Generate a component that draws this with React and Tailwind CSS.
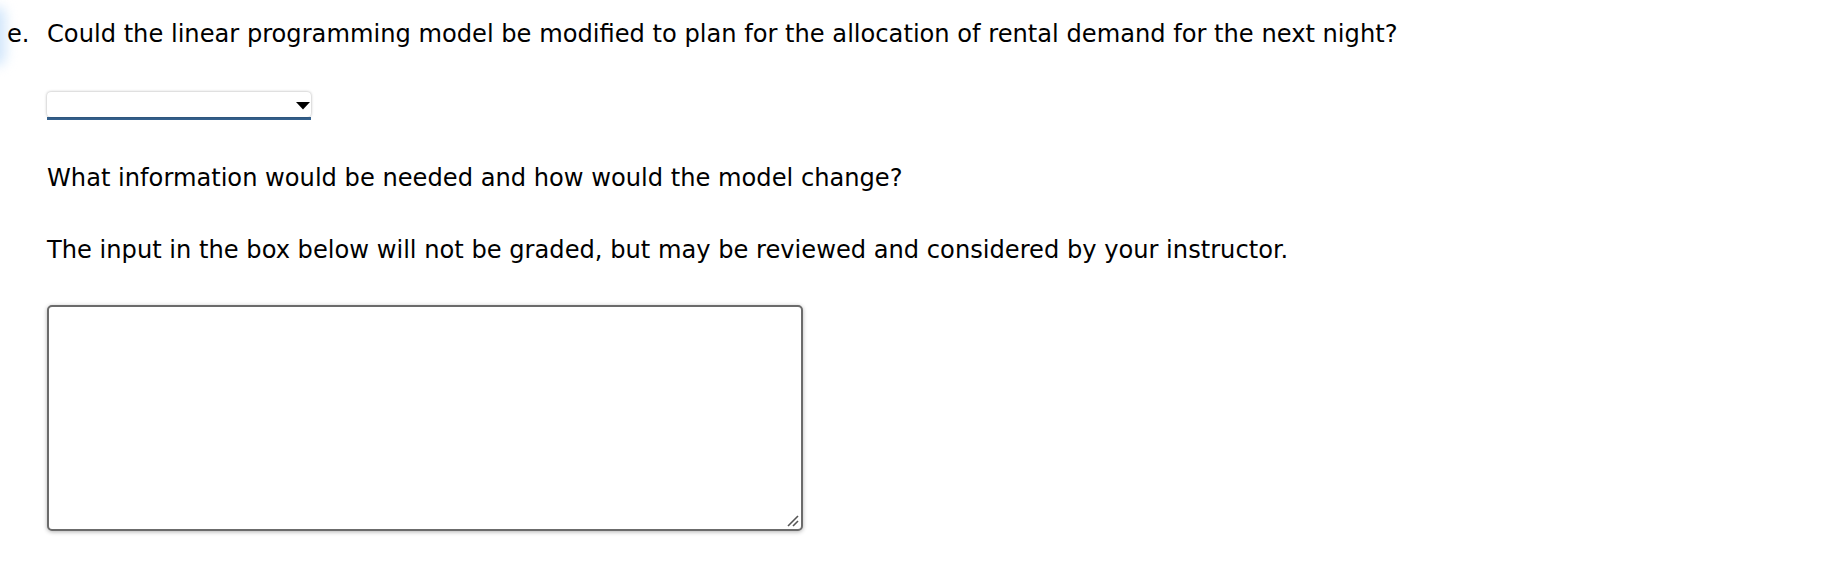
import React from "react";

export default function App() {
  return (
    <div className="relative w-[1843px] h-[573px] bg-white overflow-hidden text-black" style={{ fontFamily: '"DejaVu Sans", Verdana, sans-serif' }}>
      <div className="absolute left-[-14px] top-[6px] w-[20px] h-[60px] rounded-full bg-[#d3e7fb] blur-[6px]" />
      <div className="relative pt-[20px]">
        <div className="flex text-[24.15px] leading-[28px]">
          <span className="w-[47px] pl-[7px] shrink-0">e.</span>
          <span>Could the linear programming model be modified to plan for the allocation of rental demand for the next night?</span>
        </div>
        <div className="ml-[47px] mt-[44px] w-[264px]">
          <div className="relative h-[25px] rounded-[4px] bg-white shadow-[0_0_3px_rgba(0,0,0,0.35)]">
            <svg className="absolute right-[1px] top-[10px]" width="14" height="8" viewBox="0 0 14 8">
              <polygon points="0,0 14,0 7,7.5" fill="#000" />
            </svg>
          </div>
          <div className="h-[3px] bg-[#35628f]" />
        </div>
        <div className="ml-[47px] mt-[44px] text-[24.15px] leading-[28px]">What information would be needed and how would the model change?</div>
        <div className="ml-[47px] mt-[44px] text-[24.15px] leading-[28px]">The input in the box below will not be graded, but may be reviewed and considered by your instructor.</div>
        <div className="ml-[47px] mt-[41px] w-[756px] h-[226px] rounded-[5px] border-2 border-[#6b6b6b] bg-white shadow-[0_1px_4px_rgba(0,0,0,0.3)] relative">
          <svg className="absolute right-[2px] bottom-[2px]" width="13" height="13" viewBox="0 0 13 13">
            <line x1="2" y1="12" x2="12" y2="2" stroke="#555" strokeWidth="1.6" />
            <line x1="7" y1="12" x2="12" y2="7" stroke="#555" strokeWidth="1.6" />
          </svg>
        </div>
      </div>
    </div>
  );
}
